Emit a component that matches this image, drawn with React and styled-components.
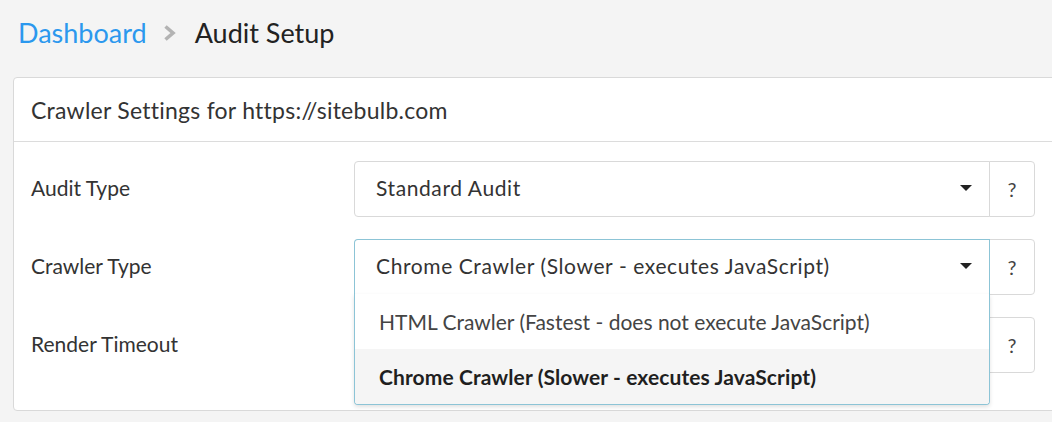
import React from 'react';
import styled, { createGlobalStyle } from 'styled-components';

const GlobalStyle = createGlobalStyle`
  html, body {
    margin: 0;
    padding: 0;
    background: #f4f4f4;
    overflow: hidden;
  }
  body {
    font-family: Lato, "Open Sans", "Liberation Sans", sans-serif;
    color: #333;
  }
`;

const Page = styled.div`
  width: 1052px;
  height: 422px;
  padding: 14px 0 0 13px;
  box-sizing: border-box;
`;

const Breadcrumb = styled.nav`
  display: flex;
  align-items: center;
  padding-left: 5px;
  height: 36px;
  font-size: 27px;
`;

const Crumb = styled.a`
  color: #2b98ee;
  text-decoration: none;
`;

const Current = styled.span`
  color: #222;
`;

const ChevronIcon = styled.svg`
  margin: 2px 18px 0 15px;
`;

const Chevron = () => (
  <ChevronIcon width="15" height="18" viewBox="0 0 15 18">
    <path d="M3.5 2.5 L11 9 L3.5 15.5" fill="none" stroke="#b3b3b3" strokeWidth="3.6" />
  </ChevronIcon>
);

const Card = styled.section`
  margin-top: 27px;
  width: 1060px;
  background: #fff;
  border: 1px solid #d9d9d9;
  border-radius: 4px;
`;

const CardHeader = styled.header`
  height: 63px;
  display: flex;
  align-items: center;
  padding-left: 17px;
  font-size: 23px;
  letter-spacing: 0.25px;
  color: #333;
  border-bottom: 1px solid #dcdcdc;
`;

const CardBody = styled.div`
  padding: 19px 0 37px 17px;
  display: flex;
  flex-direction: column;
  gap: 22px;
`;

const Row = styled.div`
  display: flex;
  align-items: center;
  height: 56px;
`;

const Label = styled.label`
  width: 323px;
  padding-bottom: 4px;
  font-size: 21px;
  color: #333;
`;

const SelectWrap = styled.div`
  position: relative;
  width: 636px;
  height: 56px;
  box-sizing: border-box;
  border: 1px solid ${(p) => (p.$open ? '#8cc4d6' : '#d9d9d9')};
  border-radius: ${(p) => (p.$open ? '4px 0 0 0' : '4px 0 0 4px')};
  border-bottom-color: ${(p) => (p.$open ? '#f2f2f2' : '#d9d9d9')};
  background: #fff;
  z-index: ${(p) => (p.$open ? 2 : 1)};
`;

const SelectValue = styled.div`
  height: 100%;
  box-sizing: border-box;
  display: flex;
  align-items: center;
  justify-content: space-between;
  padding: 0 17px 3px 21px;
  font-size: 21px;
  letter-spacing: 0.6px;
  color: #333;
`;

const Caret = styled.span`
  width: 0;
  height: 0;
  border-left: 6px solid transparent;
  border-right: 6px solid transparent;
  border-top: 6px solid #222;
`;

const Menu = styled.ul`
  position: absolute;
  top: 100%;
  left: -1px;
  right: -1px;
  margin: 0;
  padding: 0;
  list-style: none;
  background: #fff;
  border: 1px solid #8cc4d6;
  border-top: none;
  border-radius: 0 0 4px 4px;
  box-shadow: 0 2px 4px rgba(0, 0, 0, 0.12);
  overflow: hidden;
`;

const Option = styled.li`
  height: 55px;
  display: flex;
  align-items: center;
  padding-left: 24px;
  font-size: 21px;
  letter-spacing: ${(p) => (p.$selected ? '0.1px' : '0')};
  color: ${(p) => (p.$selected ? '#1f1f1f' : '#444')};
  font-weight: ${(p) => (p.$selected ? 700 : 400)};
  background: ${(p) => (p.$selected ? '#f5f5f5' : '#fff')};
`;

const HelpButton = styled.button`
  width: 46px;
  height: 56px;
  margin-left: -1px;
  border: 1px solid #d9d9d9;
  border-radius: 0 4px 4px 0;
  background: #fff;
  font-family: inherit;
  font-size: 20px;
  color: #444;
  padding: 0;
`;

const rows = [
  { label: 'Audit Type', value: 'Standard Audit' },
  {
    label: 'Crawler Type',
    value: 'Chrome Crawler (Slower - executes JavaScript)',
    open: true,
    options: [
      'HTML Crawler (Fastest - does not execute JavaScript)',
      'Chrome Crawler (Slower - executes JavaScript)',
    ],
  },
  { label: 'Render Timeout', value: '' },
];

const App = () => {
  return (
    <>
      <GlobalStyle />
      <Page>
        <Breadcrumb>
          <Crumb href="#">Dashboard</Crumb>
          <Chevron />
          <Current>Audit Setup</Current>
        </Breadcrumb>

        <Card>
          <CardHeader>Crawler Settings for https://sitebulb.com</CardHeader>
          <CardBody>
            {rows.map((row) => (
              <Row key={row.label}>
                <Label>{row.label}</Label>
                <SelectWrap $open={row.open}>
                  <SelectValue>
                    <span>{row.value}</span>
                    <Caret />
                  </SelectValue>
                  {row.open && (
                    <Menu>
                      {row.options.map((opt) => (
                        <Option key={opt} $selected={opt === row.value}>
                          {opt}
                        </Option>
                      ))}
                    </Menu>
                  )}
                </SelectWrap>
                <HelpButton>?</HelpButton>
              </Row>
            ))}
          </CardBody>
        </Card>
      </Page>
    </>
  );
};

export default App;
